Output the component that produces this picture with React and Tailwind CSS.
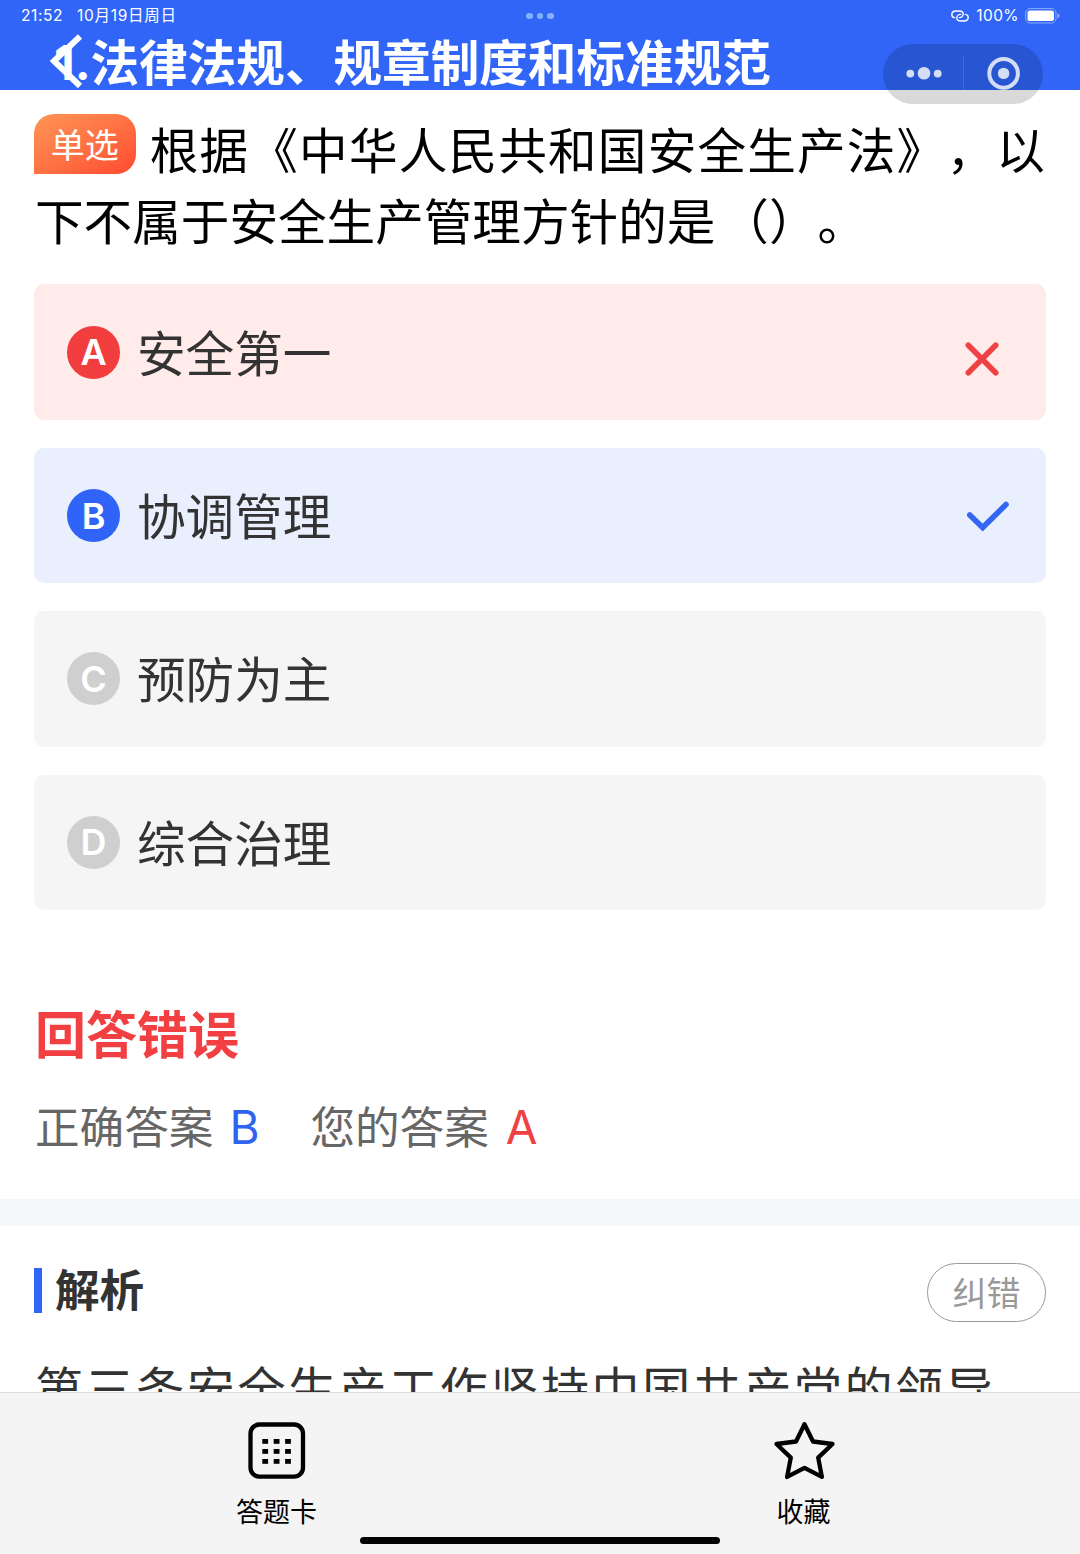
import React from 'react';
import clsx from 'clsx';

const options = [
  { key: 'A', text: '安全第一', status: 'wrong' },
  { key: 'B', text: '协调管理', status: 'right' },
  { key: 'C', text: '预防为主', status: 'idle' },
  { key: 'D', text: '综合治理', status: 'idle' },
];

function StatusBar() {
  return (
    <div className="relative flex h-8 items-center justify-between pl-[21px] pr-[20px] text-[15px] leading-8 text-white">
      <div className="flex items-center">
        <span className="font-['Inter'] text-[15.5px] tracking-[0.6px]">21:52</span>
        <span className="ml-[14px] font-['Inter','Noto_Sans_CJK_SC',sans-serif] text-[15.5px] tracking-[0.7px]">10月19日周日</span>
      </div>

      {/* Multitasking dots */}
      <div className="absolute left-[526px] top-[12.5px] flex gap-[4px]">
        <i className="size-[6.6px] rounded-full bg-[#84b1ff]" />
        <i className="size-[6.6px] rounded-full bg-[#84b1ff]" />
        <i className="size-[6.6px] rounded-full bg-[#84b1ff]" />
      </div>

      <div className="flex items-center">
        <svg width="18" height="12" viewBox="0 0 18 12" fill="none" stroke="currentColor" strokeWidth="1.4" strokeLinecap="round">
          <path d="M3.6 7.6C1.8 7.3.8 6.1.8 4.7.8 2.5 2.6 1 5 1h3.2c2.5 0 4 1.2 4 3s-1.6 3.6-3.8 3.6" />
          <path d="M14.4 4.4c1.8.3 2.8 1.5 2.8 2.9 0 2.2-1.8 3.7-4.2 3.7H9.8c-2.5 0-4-1.2-4-3s1.6-3.6 3.8-3.6" />
        </svg>
        <span className="ml-[7px] font-['Inter'] text-[15.5px] tracking-[0.4px]">100%</span>
        <svg className="ml-[6px]" width="35" height="16" viewBox="0 0 35 16" fill="none">
          <rect x="0.6" y="0.6" width="30.4" height="14.4" rx="4.5" stroke="#fff" strokeOpacity="0.45" />
          <rect x="2.5" y="2.5" width="26.5" height="10.6" rx="2.6" fill="#fff" />
          <path d="M32.5 5.2c1.3.6 2 1.5 2 2.6s-.7 2-2 2.6z" fill="#fff" fillOpacity="0.5" />
        </svg>
      </div>
    </div>
  );
}

function Capsule() {
  return (
    <div className="absolute left-[883px] top-[44px] flex h-[60px] w-[160px] items-center rounded-full bg-black/15">
      <svg width="160" height="60" viewBox="0 0 160 60" fill="#fff" fillOpacity="0.8">
        <circle cx="27.3" cy="29.6" r="3.9" />
        <circle cx="41" cy="29.3" r="6.3" />
        <circle cx="54.7" cy="29.6" r="3.9" />
        <rect x="80" y="12" width="1" height="36" fillOpacity="0.12" />
        <circle cx="120.6" cy="29.4" r="14.3" fill="none" stroke="#fff" strokeOpacity="0.8" strokeWidth="4" />
        <circle cx="120.6" cy="29.4" r="5.7" />
      </svg>
    </div>
  );
}

function Header() {
  return (
    <header className="relative z-10 h-[89.5px] shrink-0 bg-[#3065f8]">
      <StatusBar />
      <h1 className="flex h-[56px] items-center pl-[54px] text-[48.6px] font-bold leading-[56px] text-white">
        <span className="w-[36.5px] whitespace-nowrap pt-[5px] font-['Inter'] text-[48px] font-bold">1.</span>
        <span className="whitespace-nowrap">法律法规、规章制度和标准规范</span>
      </h1>
      <svg className="absolute left-[48px] top-[32px]" width="36" height="58" viewBox="0 0 36 58" fill="none" stroke="#fff" strokeWidth="6">
        <path d="M32 4.5 6 29l26 25" />
      </svg>
      <Capsule />
    </header>
  );
}

function OptionRow({ option }) {
  const { key, text, status } = option;

  return (
    <li
      className={clsx(
        'flex h-[135.4px] items-center rounded-[10px] pl-[33px]',
        status === 'wrong' && 'bg-[#feebea]',
        status === 'right' && 'bg-[#eaeffe]',
        status === 'idle' && 'bg-[#f5f5f5]'
      )}
    >
      <span
        className={clsx(
          "flex size-[53px] items-center justify-center rounded-full font-['Inter'] text-[36px] font-semibold leading-none text-white",
          status === 'wrong' && 'bg-[#f23d3f]',
          status === 'right' && 'bg-[#3064f8]',
          status === 'idle' && 'bg-[#d0cfd0]'
        )}
      >
        {key}
      </span>
      <span className="ml-[17px] flex-1 pb-[3px] text-[48.6px] leading-[60px] text-[#333]">{text}</span>
      {status === 'wrong' && (
        <svg className="mr-[46px] mt-[13px]" width="36" height="36" viewBox="0 0 36 36" stroke="#ef4143" strokeWidth="5.6" strokeLinecap="round">
          <path d="M4.3 4.3l27.4 27.4M31.7 4.3L4.3 31.7" />
        </svg>
      )}
      {status === 'right' && (
        <svg className="mr-[36px] mt-[1px]" width="44" height="32" viewBox="0 0 44 32" fill="none" stroke="#3566f3" strokeWidth="5.6" strokeLinecap="round">
          <path d="M3.8 15 16.7 27.5 40 4.5" />
        </svg>
      )}
    </li>
  );
}

function TabBar() {
  return (
    <footer className="relative flex h-[162px] shrink-0 justify-between border-t border-[#dcdcdc] bg-[#f4f4f4] px-[236px] pt-[28px] text-[27px] leading-[36px] text-black">
      <div className="flex w-[81px] flex-col items-center">
        <svg width="60" height="60" viewBox="0 0 60 60" fill="none">
          <rect x="3.5" y="3.5" width="52.5" height="52.2" rx="9" stroke="#000" strokeWidth="4.3" />
          {[0, 1, 2].map((row) =>
            [0, 1, 2].map((col) => (
              <rect key={`${row}-${col}`} x={15.3 + col * 11.4} y={18 + row * 10} width="5.8" height="4.8" fill="#000" />
            ))
          )}
        </svg>
        <span className="mt-[12px] whitespace-nowrap">答题卡</span>
      </div>
      <div className="flex w-[81px] flex-col items-center">
        <svg width="64" height="60" viewBox="0 0 64 60" fill="none" stroke="#000" strokeWidth="4.3" strokeLinejoin="round">
          <path d="M32.5 3.3l8.5 17.2 19.5 2.5-14.3 13.6 3.7 19.3-17.4-9-17.4 9 3.7-19.3L4.5 23 24 20.5z" />
        </svg>
        <span className="mt-[12px] whitespace-nowrap">收藏</span>
      </div>
      {/* Home indicator */}
      <div className="absolute bottom-[10px] left-[360px] h-[7.5px] w-[360px] rounded-full bg-black" />
    </footer>
  );
}

export default function App() {
  return (
    <div lang="zh-CN" className="flex h-[1554px] w-[1080px] flex-col overflow-hidden bg-white font-['Noto_Sans_CJK_SC',sans-serif] [text-spacing-trim:space-all]">
      <Header />

      <main className="min-h-0 flex-1 overflow-hidden">
        <section className="px-[34px] pt-[24.8px]">
          {/* Question */}
          <div className="h-[170.2px] whitespace-nowrap text-[48.6px] leading-[71px] text-black">
            <div className="flex">
              <span className="flex h-[60px] w-[103px] items-center justify-center rounded-[20px] rounded-bl-none bg-linear-to-br from-[#ff9556] to-[#ff4730] pb-px text-[34px] leading-[59px] text-white">
                单选
              </span>
              <span className="-mt-px ml-[14px] tracking-[1.2px]">根据《中华人民共和国安全生产法》，以</span>
            </div>
            <div className="pl-[1px]">
              下不属于安全生产管理方针的是<span className="ml-[5px]">（）。</span>
            </div>
          </div>

          <ul className="flex flex-col gap-[28px]">
            {options.map((option) => (
              <OptionRow key={option.key} option={option} />
            ))}
          </ul>

          {/* Result */}
          <div className="mt-[86px] pl-[1px] text-[51px] font-bold leading-[72px] text-[#f23f41]">回答错误</div>
          <div className="mt-[25px] flex h-[64px] items-center pl-[1px] text-[44.6px] leading-[64px] text-[#666]">
            <span>正确答案</span>
            <span className="ml-[16px] w-[81px] pt-[4px] font-['Inter'] text-[46px] text-[#3064f0]">B</span>
            <span>您的答案</span>
            <span className="ml-[17px] pt-[4px] font-['Inter'] text-[46px] text-[#ef4143]">A</span>
          </div>
        </section>

        <div className="mt-[42.2px] h-[27px] bg-[#f3f7f9]" />

        {/* Explanation */}
        <section className="px-[34px] pt-[37px]">
          <div className="flex h-[59px] items-center">
            <i className="-mt-[4px] h-[45px] w-[8px] bg-[#3065f8]" />
            <h2 className="ml-[13px] flex-1 pb-[10px] text-[44.6px] font-bold leading-[59px] text-[#333]">解析</h2>
            <span className="flex h-[59px] w-[119px] items-center justify-center rounded-full border border-[#999] pb-[2px] text-[34px] leading-[55px] text-[#999]">
              纠错
            </span>
          </div>
          <p className="mt-[28px] whitespace-nowrap pl-[1px] text-[48px] leading-[72px] tracking-[2.6px] text-[#333]">
            第三条安全生产工作坚持中国共产党的领导
          </p>
        </section>
      </main>

      <TabBar />
    </div>
  );
}
